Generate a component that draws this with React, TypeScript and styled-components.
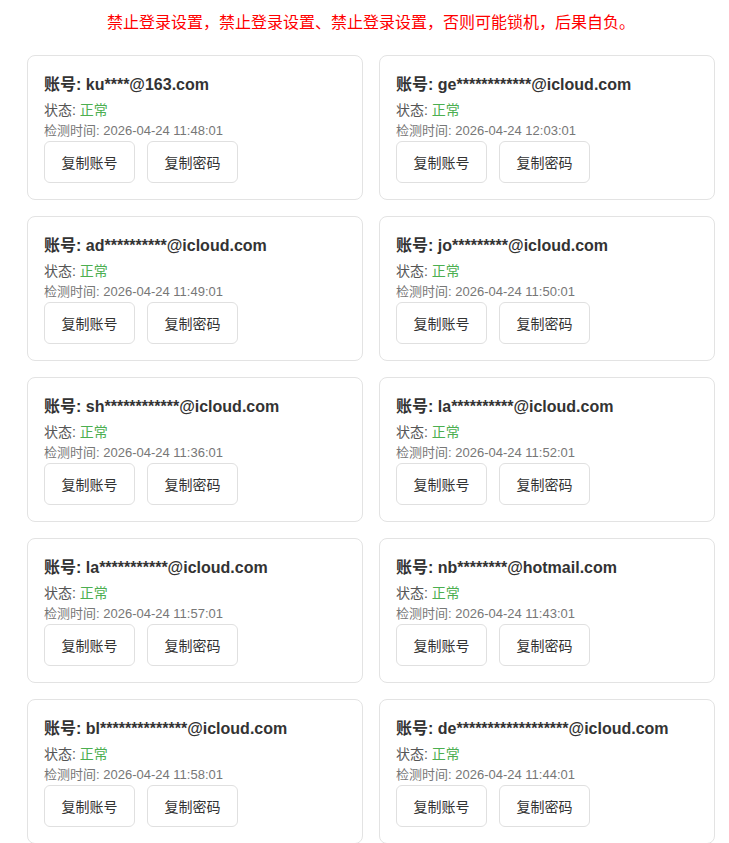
import React from "react";
import styled, { createGlobalStyle } from "styled-components";

const GlobalStyle = createGlobalStyle`
  html, body {
    margin: 0;
    padding: 0;
    background: #ffffff;
  }
  body {
    font-family: "Liberation Sans", Arial, "Noto Sans CJK SC", sans-serif;
    color: #333;
  }
`;

const Page = styled.div`
  width: 688px;
  margin-left: 27px;
  padding-top: 11px;
`;

const Warning = styled.div`
  color: #ff0000;
  font-size: 16px;
  line-height: 24px;
  text-align: center;
  margin-bottom: 20px;
`;

const Grid = styled.div`
  display: grid;
  grid-template-columns: 1fr 1fr;
  gap: 16px;
`;

const Card = styled.div`
  border: 1px solid #e3e3e3;
  border-radius: 8px;
  padding: 16px;
  background: #fff;
`;

const Account = styled.div`
  font-size: 16px;
  font-weight: bold;
  line-height: 25px;
  color: #333;
  margin-bottom: 3px;
  white-space: nowrap;
`;

const Status = styled.div`
  font-size: 14px;
  line-height: 20px;
  color: #555;
`;

const Ok = styled.span`
  color: #4caf50;
`;

const CheckTime = styled.div`
  font-size: 13px;
  line-height: 21px;
  color: #777;
`;

const Actions = styled.div`
  display: flex;
  gap: 12px;
`;

const Button = styled.button`
  height: 42px;
  padding: 0 16.5px;
  border: 1px solid #e0e0e0;
  border-radius: 6px;
  background: #fff;
  color: #333;
  font-family: inherit;
  font-size: 14px;
  cursor: pointer;
`;

type Item = { account: string; time: string };

const items: Item[] = [
  { account: "ku****@163.com", time: "2026-04-24 11:48:01" },
  { account: "ge************@icloud.com", time: "2026-04-24 12:03:01" },
  { account: "ad**********@icloud.com", time: "2026-04-24 11:49:01" },
  { account: "jo*********@icloud.com", time: "2026-04-24 11:50:01" },
  { account: "sh************@icloud.com", time: "2026-04-24 11:36:01" },
  { account: "la**********@icloud.com", time: "2026-04-24 11:52:01" },
  { account: "la***********@icloud.com", time: "2026-04-24 11:57:01" },
  { account: "nb********@hotmail.com", time: "2026-04-24 11:43:01" },
  { account: "bl**************@icloud.com", time: "2026-04-24 11:58:01" },
  { account: "de******************@icloud.com", time: "2026-04-24 11:44:01" },
];

export default function App() {
  return (
    <>
      <GlobalStyle />
      <Page>
        <Warning>
          禁止登录设置，禁止登录设置、禁止登录设置，否则可能锁机，后果自负。
        </Warning>
        <Grid>
          {items.map((item, i) => (
            <Card key={i}>
              <Account>账号: {item.account}</Account>
              <Status>
                状态: <Ok>正常</Ok>
              </Status>
              <CheckTime>检测时间: {item.time}</CheckTime>
              <Actions>
                <Button>复制账号</Button>
                <Button>复制密码</Button>
              </Actions>
            </Card>
          ))}
        </Grid>
      </Page>
    </>
  );
}
